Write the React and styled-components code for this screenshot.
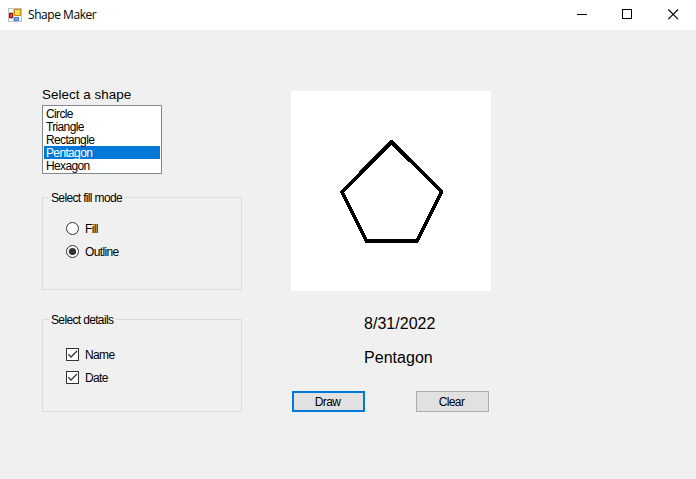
import React, { useState } from "react";
import styled, { createGlobalStyle } from "styled-components";

const GlobalStyle = createGlobalStyle`
  *, *::before, *::after { box-sizing: border-box; }
  body { margin: 0; background: #f0f0f0; overflow: hidden; }
`;

const Window = styled.div`
  width: 696px;
  height: 479px;
  background: #f0f0f0;
  color: #000;
  font: 12px/13px "Liberation Sans", Arial, sans-serif;
  letter-spacing: -0.65px;
  display: flex;
  flex-direction: column;
`;

const TitleBar = styled.header`
  height: 30px;
  flex: none;
  background: #fff;
  display: flex;
  align-items: center;
  padding: 0 1px 0 8px;
`;

const Title = styled.h1`
  margin: 0 auto 0 6px;
  font: 400 12px/16px "Open Sans", "Noto Sans", sans-serif;
  letter-spacing: -0.45px;
`;

const WindowButton = styled.button`
  width: 45px;
  height: 30px;
  padding: 0 0 2px;
  border: 0;
  background: transparent;
  display: grid;
  place-items: center;
`;

const Content = styled.main`
  display: flex;
  gap: 49px;
  padding: 57px 0 0 42px;
`;

const Options = styled.section`
  width: 200px;
  display: flex;
  flex-direction: column;
`;

const Heading = styled.label`
  font-size: 13.4px;
  line-height: 16px;
  letter-spacing: 0.05px;
  height: 18px;
`;

const List = styled.ul`
  list-style: none;
  width: 120px;
  height: 69px;
  margin: 0 0 17px;
  padding: 1px;
  background: #fff;
  border: 1px solid #828790;
`;

const ListItem = styled.li`
  height: 13px;
  padding-left: 2px;
  line-height: 14px;
  background: ${(p) => (p.$selected ? "#0078d7" : "transparent")};
  color: ${(p) => (p.$selected ? "#fff" : "#000")};
`;

const Group = styled.fieldset`
  height: 99px;
  margin: 0 0 23px;
  padding: ${(p) => p.$inset}px 0 0 23px;
  border: 1px solid #dcdcdc;
  display: flex;
  flex-direction: column;
  gap: 10px;
  min-width: 0;
`;

const Legend = styled.legend`
  margin-left: -17px;
  padding: 0 3px 0 2px;
  height: 13px;
  line-height: 15px;
`;

const Choice = styled.label`
  display: flex;
  align-items: center;
  gap: 6px;
  height: 13px;
  line-height: 15px;
`;

const ChoiceText = styled.span`
  padding-top: 2px;
`;

const Mark = styled.svg`
  display: block;
  flex: none;
`;

const Preview = styled.section`
  width: 200px;
  padding-top: 4px;
  display: flex;
  flex-direction: column;
`;

const Canvas = styled.svg`
  display: block;
  width: 200px;
  height: 200px;
  background: #fff;
`;

const Details = styled.div`
  padding: 23px 0 0 73px;
  height: 100px;
  display: flex;
  flex-direction: column;
  gap: 14px;
  font-size: 16px;
  line-height: 20px;
  letter-spacing: 0.03px;
`;

const Actions = styled.div`
  display: flex;
  gap: 51px;
  padding-left: 1px;
`;

const Button = styled.button`
  width: 73px;
  height: 21px;
  padding: 1px 2px 0 0;
  color: #000;
  font: inherit;
  line-height: 13px;
  letter-spacing: -0.6px;
  background: #e1e1e1;
  border: ${(p) => (p.$primary ? "2px solid #0078d7" : "1px solid #adadad")};
  display: flex;
  align-items: center;
  justify-content: center;
`;

const FormIcon = () => (
  <Mark width="14" height="14" viewBox="0 0 14 14">
    <rect x=".5" y=".5" width="13" height="13" fill="#f8f8f8" stroke="#bfbfbf" />
    <path d="M5.5 0v14M0 4.5h6M0 10.5h6" stroke="#c8c8c8" />
    <rect x="1.5" y="5.5" width="3" height="4" fill="#e04838" stroke="#a51410" />
    <rect x="6.5" y="1.5" width="6" height="6" fill="#ffdb52" stroke="#c4920c" />
    <rect x="6.5" y="9.5" width="4" height="3" fill="#79aaf2" stroke="#4b7fdb" />
  </Mark>
);

const Radio = ({ checked }) => (
  <Mark width="13" height="13" viewBox="0 0 13 13">
    <circle cx="6.5" cy="6.5" r="6" fill="#fff" stroke="#333" />
    {checked && <circle cx="6.5" cy="6.5" r="3.6" fill="#333" />}
  </Mark>
);

const Checkbox = ({ checked }) => (
  <Mark width="13" height="13" viewBox="0 0 13 13">
    <rect x=".5" y=".5" width="12" height="12" fill="#fff" stroke="#333" />
    {checked && <path d="M2.3 6.3 5 9 11 3" fill="none" stroke="#333" strokeWidth="1.3" />}
  </Mark>
);

const shapes = ["Circle", "Triangle", "Rectangle", "Pentagon", "Hexagon"];

export default function App() {
  const [shape, setShape] = useState("Pentagon");
  const [mode, setMode] = useState("Outline");
  return (
    <>
      <GlobalStyle />
      <Window>
        <TitleBar>
          <FormIcon />
          <Title>Shape Maker</Title>
          <WindowButton aria-label="Minimize">
            <Mark width="11" height="11"><path d="M0 5.5h10" stroke="#000" /></Mark>
          </WindowButton>
          <WindowButton aria-label="Maximize">
            <Mark width="11" height="11"><rect x=".5" y=".5" width="9" height="9" fill="none" stroke="#000" /></Mark>
          </WindowButton>
          <WindowButton aria-label="Close">
            <Mark width="12" height="11"><path d="M1.3 .5l9.7 9.7M11 .5l-9.7 9.7" stroke="#000" strokeWidth="1.1" /></Mark>
          </WindowButton>
        </TitleBar>
        <Content>
          <Options>
            <Heading>Select a shape</Heading>
            <List>
              {shapes.map((s) => (
                <ListItem key={s} $selected={s === shape} onClick={() => setShape(s)}>{s}</ListItem>
              ))}
            </List>
            <Group $inset={18}>
              <Legend>Select fill mode</Legend>
              {["Fill", "Outline"].map((m) => (
                <Choice key={m} onClick={() => setMode(m)}>
                  <Radio checked={mode === m} />
                  <ChoiceText>{m}</ChoiceText>
                </Choice>
              ))}
            </Group>
            <Group $inset={22}>
              <Legend>Select details</Legend>
              <Choice><Checkbox checked /><ChoiceText>Name</ChoiceText></Choice>
              <Choice><Checkbox checked /><ChoiceText>Date</ChoiceText></Choice>
            </Group>
          </Options>
          <Preview>
            <Canvas viewBox="0 0 200 200">
              <polygon
                points="100.5,51 150.5,100.7 126,150 75.5,150 51,100.7"
                fill="none"
                stroke="#000"
                strokeWidth="3.7"
                strokeLinejoin="round"
                shapeRendering="crispEdges"
              />
            </Canvas>
            <Details>
              <span>8/31/2022</span>
              <span>Pentagon</span>
            </Details>
            <Actions>
              <Button $primary>Draw</Button>
              <Button>Clear</Button>
            </Actions>
          </Preview>
        </Content>
      </Window>
    </>
  );
}
